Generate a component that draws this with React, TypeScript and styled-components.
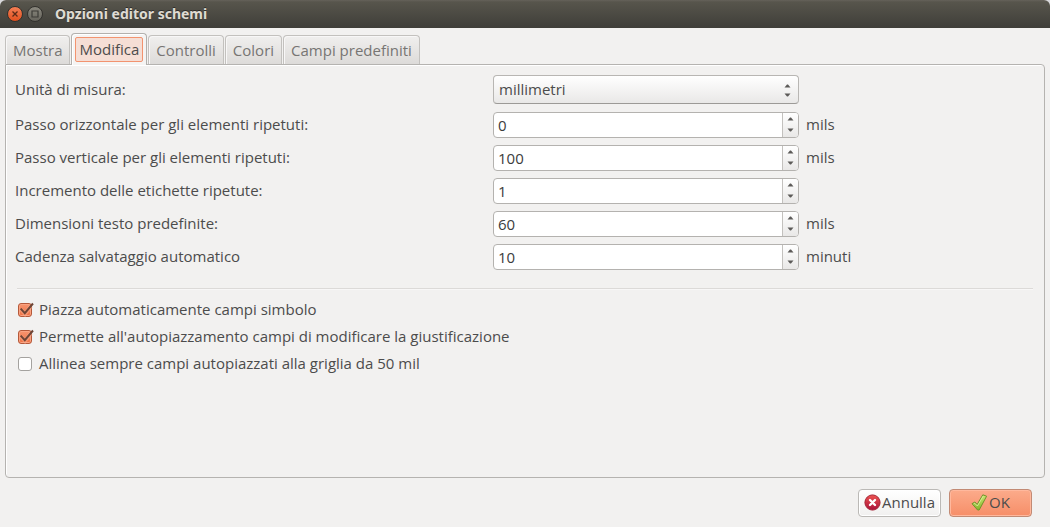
import React, { useState } from "react";
import styled, { createGlobalStyle, css } from "styled-components";

const GlobalStyle = createGlobalStyle`
  *, *::before, *::after { box-sizing: border-box; }
  body { margin: 0; background: #d9d9dc; }
  body, button, input, select {
    font-family: "Open Sans", "Noto Sans", sans-serif;
    font-size: 15px;
    line-height: 19px;
    color: #4c4c4c;
  }
`;

const Dialog = styled.div`
  min-height: 100vh;
  display: flex;
  flex-direction: column;
  background: #f2f1f0;
  border-radius: 6px 6px 0 0;
  overflow: hidden;
`;

const TitleBar = styled.header`
  height: 28px;
  display: flex;
  align-items: center;
  gap: 4px;
  padding: 0 7px;
  background: linear-gradient(#65625a 0, #57554c 2px, #3f3e39 100%);
`;

const WindowButton = styled.button<{ $close?: boolean }>`
  width: 16px;
  height: 16px;
  padding: 0;
  border: 1px solid #33322e;
  border-radius: 50%;
  display: grid;
  place-items: center;
  background: ${(p) =>
    p.$close ? "linear-gradient(#f47e54, #e2511f)" : "linear-gradient(#8a887e, #65635b)"};
`;

const Title = styled.h1`
  margin: 0 0 0 8px;
  font-family: "Noto Sans", sans-serif;
  font-size: 14px;
  line-height: 20px;
  font-weight: 700;
  color: #dfdbd2;
  text-shadow: 0 -1px 0 #2e2d2a;
`;

const Tabs = styled.div`
  display: flex;
  align-items: flex-end;
  gap: 1px;
  height: 36px;
  padding: 0 5px;
`;

const Tab = styled.button<{ $active: boolean }>`
  height: 29px;
  padding: 0 7px;
  border: 1px solid #c3c1be;
  border-bottom: 0;
  border-radius: 4px 4px 0 0;
  color: #777573;
  background: linear-gradient(#f0efee, #dddbd9);
  box-shadow: inset 1px 1px 0 #f8f7f7;
  white-space: nowrap;
  ${(p) =>
    p.$active &&
    css`
      position: relative;
      height: 32px;
      margin-bottom: -1px;
      padding: 3px;
      border-color: #b2b0ad;
      color: #4c4c4c;
      background: #f5f4f3;
      box-shadow: inset 1px 1px 0 #fff;
    `}
`;

const TabText = styled.span<{ $active: boolean }>`
  display: block;
  line-height: 20px;
  ${(p) =>
    p.$active &&
    css`
      padding: 1px 3px 2px;
      border: 1px solid #f2936f;
      border-radius: 2px;
      background: #f5ded5;
    `}
`;

const Panel = styled.main`
  flex: 1;
  margin: 0 5px;
  padding: 10px 9px;
  border: 1px solid #b5b3b0;
  border-radius: 0 4px 4px 4px;
  box-shadow: inset 1px 1px 0 #fff;
`;

const Fields = styled.div`
  display: grid;
  gap: 7px;
`;

const Row = styled.div`
  display: grid;
  grid-template-columns: minmax(0, 478fr) minmax(0, 306fr) minmax(0, 236fr);
  align-items: center;
`;

const FieldLabel = styled.label`
  padding-bottom: 1px;
`;

const Suffix = styled.span`
  padding: 0 0 1px 7px;
`;

const SelectBox = styled.div`
  display: grid;
  align-items: center;
  padding-bottom: 1px;
  & > * { grid-area: 1 / 1; }
  & > svg { justify-self: end; margin: 2px 8px 0 0; pointer-events: none; }
`;

const Select = styled.select`
  appearance: none;
  width: 100%;
  height: 29px;
  padding: 0 24px 0 5px;
  border: 1px solid #b8b6b3;
  border-bottom-color: #9c9a97;
  border-radius: 4px;
  background: linear-gradient(#fff, #e9e8e7);
`;

const SpinBox = styled.div`
  display: flex;
  height: 26px;
  border: 1px solid #b4b2af;
  border-radius: 4px;
  background: #fff;
  overflow: hidden;
`;

const SpinInput = styled.input`
  flex: 1;
  min-width: 0;
  padding: 0 4px;
  border: 0;
  outline: 0;
  background: transparent;
  color: #3c3c3c;
`;

const SpinButtons = styled.div`
  width: 16px;
  display: grid;
  grid-template-rows: 1fr 1fr;
  padding: 1px 0 2px;
  border-left: 1px solid #c3c1be;
  background: linear-gradient(#fff, #e9e8e7);
`;

const SpinButton = styled.button`
  display: grid;
  place-items: center;
  padding: 0;
  border: 0;
  background: transparent;
`;

const Separator = styled.hr`
  margin: 18px 2px 6px;
  border: 0;
  border-top: 1px solid #dcdad8;
  border-bottom: 1px solid #f8f7f7;
`;

const Check = styled.label`
  display: flex;
  align-items: center;
  gap: 5px;
  height: 27px;
  padding-left: 3px;
`;

const CheckText = styled.span`
  padding-bottom: 1px;
`;

const CheckMark = styled.span`
  display: grid;
  align-items: center;
  width: 16px;
  height: 16px;
  & > * { grid-area: 1 / 1; margin: 0; }
  & > svg { pointer-events: none; }
`;

const CheckInput = styled.input`
  appearance: none;
  width: 14px;
  height: 14px;
  border: 1px solid #a4a29f;
  border-radius: 3px;
  background: #fff;
  &:checked {
    border-color: #b5593a;
    background: linear-gradient(#f79570, #ef7142);
    box-shadow: inset 0 0 0 1px #faa382;
  }
`;

const Actions = styled.footer`
  display: flex;
  justify-content: flex-end;
  gap: 8px;
  padding: 11px 18px 10px;
`;

const Action = styled.button<{ $primary?: boolean }>`
  display: flex;
  align-items: center;
  justify-content: center;
  gap: 1px;
  min-width: 83px;
  height: 28px;
  padding: 0 4px 1px;
  border: 1px solid ${(p) => (p.$primary ? "#c28a74" : "#bbb9b6")};
  border-radius: 4px;
  background: ${(p) =>
    p.$primary ? "linear-gradient(#fcab8b, #f68e68)" : "linear-gradient(#fff, #f1f0ef)"};
  box-shadow: inset 0 0 0 1px ${(p) => (p.$primary ? "#ffb89d" : "#fff")};
`;

const Up = () => (
  <svg width="7" height="4" viewBox="0 0 7 4"><path d="M0.5 3.5 3 .5h1l2.5 3z" fill="#5c5a58" /></svg>
);
const Down = () => (
  <svg width="7" height="4" viewBox="0 0 7 4"><path d="M.5 .5 3 3.5h1l2.5-3z" fill="#5c5a58" /></svg>
);
const SelectArrows = () => (
  <svg width="7" height="13" viewBox="0 0 7 13">
    <path d="M.5 3.5 3 .5h1l2.5 3zM.5 9.5 3 12.5h1l2.5-3z" fill="#5c5a58" />
  </svg>
);
const Tick = () => (
  <svg width="16" height="16" viewBox="0 0 16 16">
    <path d="M3 7.5 7 12 13 4" fill="none" stroke="#f9b094" strokeWidth="4" opacity=".5" />
    <path d="M2.7 6.6 6.8 11.2 15 1.5" fill="none" stroke="#6e4536" strokeWidth="2" />
  </svg>
);
const CancelIcon = () => (
  <svg width="17" height="17" viewBox="0 0 17 17">
    <defs>
      <linearGradient id="red" x1="0" y1="0" x2="0" y2="1">
        <stop offset="0" stopColor="#ee5350" /><stop offset="1" stopColor="#a9123a" />
      </linearGradient>
    </defs>
    <circle cx="8.5" cy="8.5" r="7.6" fill="url(#red)" stroke="#a52536" />
    <path d="m6 6 5 5m0-5-5 5" stroke="#fff" strokeWidth="2.4" strokeLinecap="round" />
  </svg>
);
const OkIcon = () => (
  <svg width="17" height="17" viewBox="0 0 17 17">
    <defs>
      <linearGradient id="green" x1="0" y1="0" x2="0" y2="1">
        <stop offset="0" stopColor="#cbe673" /><stop offset="1" stopColor="#83b52c" />
      </linearGradient>
    </defs>
    <path d="M1 9.7 3.8 8 6.2 10.4 11.8 .8 15.6 2.2 8.2 16H6.6z" fill="url(#green)" stroke="#70922b" strokeLinejoin="round" />
    <path d="M2.7 9.9 3.7 9.3 6.4 12 12.2 2.1" fill="none" stroke="#e0f2a2" strokeWidth=".8" />
  </svg>
);

const tabs = ["Mostra", "Modifica", "Controlli", "Colori", "Campi predefiniti"];

const spins = [
  { id: "hpitch", label: "Passo orizzontale per gli elementi ripetuti:", value: 0, unit: "mils" },
  { id: "vpitch", label: "Passo verticale per gli elementi ripetuti:", value: 100, unit: "mils" },
  { id: "increment", label: "Incremento delle etichette ripetute:", value: 1, unit: "" },
  { id: "textsize", label: "Dimensioni testo predefinite:", value: 60, unit: "mils" },
  { id: "autosave", label: "Cadenza salvataggio automatico", value: 10, unit: "minuti" },
];

const checks = [
  { label: "Piazza automaticamente campi simbolo", on: true },
  { label: "Permette all'autopiazzamento campi di modificare la giustificazione", on: true },
  { label: "Allinea sempre campi autopiazzati alla griglia da 50 mil", on: false },
];

function SpinRow({ id, label, value, unit }: (typeof spins)[number]) {
  const [n, setN] = useState(value);
  return (
    <Row>
      <FieldLabel htmlFor={id}>{label}</FieldLabel>
      <SpinBox>
        <SpinInput id={id} inputMode="numeric" value={n} onChange={(e) => setN(Number(e.target.value) || 0)} />
        <SpinButtons>
          <SpinButton type="button" aria-label="Aumenta" onClick={() => setN(n + 1)}><Up /></SpinButton>
          <SpinButton type="button" aria-label="Diminuisci" onClick={() => setN(n - 1)}><Down /></SpinButton>
        </SpinButtons>
      </SpinBox>
      <Suffix>{unit}</Suffix>
    </Row>
  );
}

function CheckRow({ label, on }: (typeof checks)[number]) {
  const [checked, setChecked] = useState(on);
  return (
    <Check>
      <CheckMark>
        <CheckInput type="checkbox" checked={checked} onChange={() => setChecked(!checked)} />
        {checked && <Tick />}
      </CheckMark>
      <CheckText>{label}</CheckText>
    </Check>
  );
}

export default function App() {
  const [active, setActive] = useState("Modifica");
  return (
    <Dialog>
      <GlobalStyle />
      <TitleBar>
        <WindowButton $close type="button" aria-label="Chiudi">
          <svg width="8" height="8" viewBox="0 0 8 8"><path d="m1.5 1.5 5 5m0-5-5 5" stroke="#5b2a17" strokeWidth="1.3" /></svg>
        </WindowButton>
        <WindowButton type="button" aria-label="Massimizza">
          <svg width="8" height="8" viewBox="0 0 8 8"><path d="M1 1h6v6H1z" fill="none" stroke="#3c3b37" strokeWidth="1.2" /></svg>
        </WindowButton>
        <Title>Opzioni editor schemi</Title>
      </TitleBar>
      <Tabs role="tablist">
        {tabs.map((t) => (
          <Tab key={t} type="button" role="tab" aria-selected={t === active} $active={t === active} onClick={() => setActive(t)}>
            <TabText $active={t === active}>{t}</TabText>
          </Tab>
        ))}
      </Tabs>
      <Panel>
        <Fields>
          <Row>
            <FieldLabel htmlFor="units">Unità di misura:</FieldLabel>
            <SelectBox>
              <Select id="units" defaultValue="millimetri">
                <option>millimetri</option>
                <option>pollici</option>
              </Select>
              <SelectArrows />
            </SelectBox>
          </Row>
          {spins.map((s) => <SpinRow key={s.id} {...s} />)}
        </Fields>
        <Separator />
        {checks.map((c) => <CheckRow key={c.label} {...c} />)}
      </Panel>
      <Actions>
        <Action type="button"><CancelIcon />Annulla</Action>
        <Action type="button" $primary><OkIcon />OK</Action>
      </Actions>
    </Dialog>
  );
}
